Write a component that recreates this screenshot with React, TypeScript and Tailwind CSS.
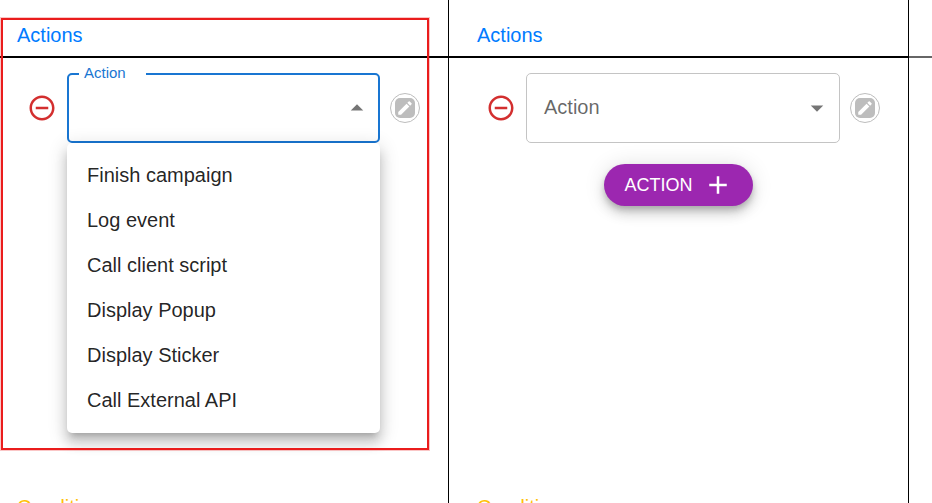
import { useId, useState } from "react";
import { MdAdd, MdArrowDropDown, MdEdit, MdRemoveCircleOutline } from "react-icons/md";
import clsx from "clsx";

const ACTIONS = [
    "Finish campaign",
    "Log event",
    "Call client script",
    "Display Popup",
    "Display Sticker",
    "Call External API",
];

const ActionSelect = ({ defaultOpen = false }: { defaultOpen?: boolean }) => {
    const id = useId();
    const [open, setOpen] = useState(defaultOpen);
    const [value, setValue] = useState("");
    const raised = open || value !== "";

    return (
        <div className="relative min-w-0 flex-1">
            <select
                id={id}
                value={value}
                onChange={(e) => setValue(e.target.value)}
                onMouseDown={(e) => {
                    e.preventDefault();
                    setOpen(!open);
                }}
                className={clsx(
                    "block h-[70px] w-full appearance-none rounded-[5px] bg-white pr-10 pl-[17px] text-xl text-black/87 outline-none",
                    open ? "border-2 border-[#1976d2]" : "border border-[#c4c4c4]"
                )}
            >
                <option value=""></option>
                {ACTIONS.map((action) => (
                    <option key={action} value={action}>{action}</option>
                ))}
            </select>
            <label
                htmlFor={id}
                className={clsx(
                    "pointer-events-none absolute",
                    raised
                        ? "-top-2 left-3 bg-white pr-5 pl-[5px] text-[15px] leading-4"
                        : "top-5 left-[18px] text-xl leading-7",
                    open ? "text-[#1976d2]" : "text-black/60"
                )}
            >
                Action
            </label>
            <MdArrowDropDown
                className={clsx(
                    "pointer-events-none absolute top-5 right-2 size-[30px] text-black/54",
                    open && "rotate-180"
                )}
            />

            {open && (
                <ul
                    className="absolute inset-x-0 top-full z-10 rounded-[5px] bg-white pt-[9px] pb-[11px] shadow-[0_6px_6px_-4px_rgba(0,0,0,0.2),0_10px_12px_1px_rgba(0,0,0,0.14),0_4px_18px_3px_rgba(0,0,0,0.12)]"
                >
                    {ACTIONS.map((action) => (
                        <li key={action}>
                            <button
                                type="button"
                                onClick={() => {
                                    setValue(action);
                                    setOpen(false);
                                }}
                                className="block h-[45px] w-full px-5 text-left text-xl text-black/87 hover:bg-black/4"
                            >
                                {action}
                            </button>
                        </li>
                    ))}
                </ul>
            )}
        </div>
    );
};

const ActionRow = ({ defaultOpen }: { defaultOpen?: boolean }) => (
    <div className="flex items-center gap-[10px]">
        <button type="button" aria-label="Remove action" className="shrink-0 text-[#d32f2f]">
            <MdRemoveCircleOutline className="size-[30px]" />
        </button>
        <ActionSelect defaultOpen={defaultOpen} />
        <button
            type="button"
            aria-label="Edit action"
            className="flex size-[30px] shrink-0 items-center justify-center rounded-full border border-[#bdbdbd]"
        >
            <span className="flex size-5 items-center justify-center rounded-[5px] bg-[#bdbdbd] text-white">
                <MdEdit className="size-[18px]" />
            </span>
        </button>
    </div>
);

const App = () => {
    return (
        <div className="h-screen overflow-hidden bg-white font-['Liberation_Sans',Arial,sans-serif]">
            <div className="grid h-full grid-cols-[449fr_460fr_23fr]">
                {/* First step, menu open */}
                <div className="relative border-r border-black">
                    <h2 className="border-b-2 border-black pt-5 pb-[6px] pl-[17px] text-xl leading-[30px] text-[#007bff]">
                        Actions
                    </h2>
                    <div className="min-h-[414px] pt-[15px] pr-7 pl-[27px]">
                        <ActionRow defaultOpen />
                    </div>
                    <h2 className="border-b-2 border-black pt-5 pb-[6px] pl-[17px] text-xl leading-[30px] text-[#ffc107]">
                        Conditions
                    </h2>

                    {/* Highlight */}
                    <div className="pointer-events-none absolute top-[18px] right-[19px] left-px z-20 h-[432px] border-2 border-[#ea1c1c] shadow-[0_0_0_1px_rgba(234,28,28,0.25)]" />
                </div>

                {/* Second step */}
                <div className="border-r border-black">
                    <h2 className="border-b-2 border-black pt-5 pb-[6px] pl-7 text-xl leading-[30px] text-[#007bff]">
                        Actions
                    </h2>
                    <div className="min-h-[414px] pt-[15px]">
                        <div className="pr-7 pl-[37px]">
                            <ActionRow />
                        </div>
                        <button
                            type="button"
                            className="mx-auto mt-[21px] flex h-[42px] items-center gap-[10px] rounded-full bg-[#9c27b0] px-5 text-lg text-white uppercase shadow-[0_4px_6px_-1px_rgba(0,0,0,0.2),0_8px_12px_0_rgba(0,0,0,0.14),0_1px_22px_0_rgba(0,0,0,0.12)]"
                        >
                            Action
                            <MdAdd className="size-[30px]" />
                        </button>
                    </div>
                    <h2 className="border-b-2 border-black pt-5 pb-[6px] pl-7 text-xl leading-[30px] text-[#ffc107]">
                        Conditions
                    </h2>
                </div>

                <div>
                    <div className="h-[58px] border-b-2 border-[#666666]" />
                </div>
            </div>
        </div>
    );
};

export default App;
